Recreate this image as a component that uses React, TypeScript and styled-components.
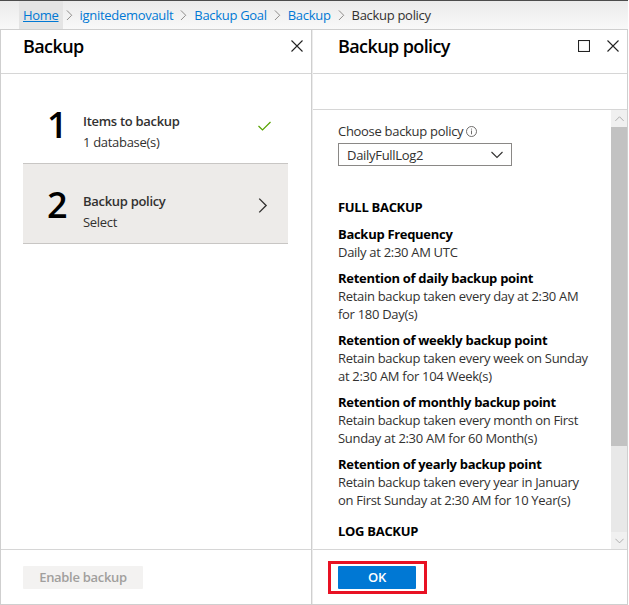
import { createGlobalStyle } from 'styled-components';
import styled from 'styled-components';

const GlobalStyle = createGlobalStyle`
  body {
    margin: 0;
    background: #ffffff;
    font-family: 'Open Sans', 'Noto Sans', sans-serif;
    letter-spacing: -0.3px;
    color: #323130;
  }
`;

const Frame = styled.div`
  width: 628px;
  height: 605px;
  display: flex;
  flex-direction: column;
  border-top: 1px solid #4c4c4c;
  box-sizing: border-box;
`;

const Breadcrumb = styled.nav`
  height: 28px;
  display: flex;
  align-items: center;
  padding-left: 19px;
  border-bottom: 1px solid #cfcfcf;
  background: linear-gradient(#ebebeb, #f9f9f9);
  font-size: 13px;
`;

const Crumb = styled.span<{ $current?: boolean; $active?: boolean }>`
  height: 100%;
  display: flex;
  align-items: center;
  padding: 0 4px;
  color: ${({ $current }) => ($current ? '#323130' : '#0078d4')};
  text-decoration: ${({ $active }) => ($active ? 'underline' : 'none')};
  background: ${({ $active }) => ($active ? '#e4e4e4' : 'transparent')};
`;

const Sep = styled.span`
  display: flex;
  align-items: center;
  margin: 0 3px;
  color: #8a8886;
`;

const Panels = styled.div`
  flex: 1;
  display: flex;
  border-left: 1px solid #cfcfcf;
  border-bottom: 1px solid #cfcfcf;
  min-height: 0;
`;

const Blade = styled.section<{ $width: number }>`
  width: ${({ $width }) => $width}px;
  display: flex;
  flex-direction: column;
  box-sizing: border-box;
  border-right: 1px solid #cfcfcf;

  & + & {
    border-left: 1px solid #ececec;
  }
`;

const Header = styled.header<{ $pad: number }>`
  height: 44px;
  flex-shrink: 0;
  display: flex;
  align-items: flex-start;
  box-sizing: border-box;
  padding-top: 4px;
  padding-left: ${({ $pad }) => $pad}px;
  padding-right: 4px;
  border-bottom: 1px solid #d6d6d6;
`;

const Title = styled.h2`
  flex: 1;
  margin: 0;
  font-size: 18px;
  line-height: 24px;
  font-weight: 600;
  letter-spacing: -0.6px;
  color: #000;
`;

const IconButton = styled.button`
  width: 20px;
  height: 20px;
  padding: 0;
  margin: 2px 0 0 9px;
  border: 0;
  background: none;
  display: flex;
  align-items: center;
  justify-content: center;
  color: #222;
`;

const Body = styled.div`
  flex: 1;
  min-height: 0;
  display: flex;
  flex-direction: column;
`;

const Steps = styled.div`
  padding: 10px 23px 0 22px;
`;

const Step = styled.div<{ $selected?: boolean }>`
  height: 79px;
  display: grid;
  grid-template-columns: 36px 1fr 30px;
  align-items: center;
  padding-left: 24px;
  border-bottom: 1px solid #c8c6c4;
  background: ${({ $selected }) => ($selected ? '#edebe9' : 'transparent')};
`;

const StepNumber = styled.div`
  font-size: 36px;
  line-height: 1;
  font-weight: 600;
  letter-spacing: 0;
  color: #000;
  padding-top: 3px;
`;

const StepText = styled.div`
  display: flex;
  flex-direction: column;
  font-size: 13px;
  line-height: 21px;
  padding-top: 16px;
`;

const StepTitle = styled.span`
  font-weight: 600;
`;

const StepIcon = styled.div`
  display: flex;
  align-items: center;
  padding-top: 4px;
`;

const Footer = styled.footer<{ $pad: number }>`
  height: 55px;
  flex-shrink: 0;
  display: flex;
  align-items: center;
  padding-left: ${({ $pad }) => $pad}px;
  border-top: 1px solid #d6d6d6;
  box-sizing: border-box;
`;

const Button = styled.button<{ $primary?: boolean; $width: number }>`
  width: ${({ $width }) => $width}px;
  height: 23px;
  border: 0;
  border-radius: 1px;
  font-family: inherit;
  letter-spacing: inherit;
  font-size: 13px;
  font-weight: 600;
  background: ${({ $primary }) => ($primary ? '#0078d4' : '#f3f2f1')};
  color: ${({ $primary }) => ($primary ? '#ffffff' : '#a19f9d')};
`;

const Highlight = styled.div`
  margin-left: -10px;
  padding: 2px 8px 2px 7px;
  border: 3px solid #e81123;
  display: flex;
`;

const CommandBar = styled.div`
  height: 35px;
  flex-shrink: 0;
  border-bottom: 1px solid #d6d6d6;
`;

const ScrollArea = styled.div`
  flex: 1;
  min-height: 0;
  display: flex;
`;

const Content = styled.div`
  flex: 1;
  overflow: hidden;
  padding: 12px 0 0 25px;
  font-size: 13px;
  line-height: 18px;
`;

const Label = styled.div`
  display: flex;
  align-items: center;
  gap: 3px;
  margin-bottom: 3px;
`;

const Select = styled.div`
  width: 174px;
  height: 23px;
  box-sizing: border-box;
  border: 1px solid #8a8886;
  display: flex;
  align-items: center;
  justify-content: space-between;
  padding: 0 8px 0 8px;
`;

const Heading = styled.div<{ $top: number }>`
  margin-top: ${({ $top }) => $top}px;
  margin-bottom: 9px;
  font-weight: 700;
  color: #000;
`;

const Group = styled.div`
  margin-bottom: 8px;
`;

const GroupTitle = styled.div`
  font-weight: 700;
  color: #000;
`;

const Scrollbar = styled.div`
  width: 16px;
  flex-shrink: 0;
  display: flex;
  flex-direction: column;
  background: #e8e8e8;
`;

const Arrow = styled.div`
  height: 17px;
  display: flex;
  align-items: center;
  justify-content: center;
  background: #f0f0f0;
`;

const Thumb = styled.div`
  height: 319px;
  background: #c2c2c2;
`;

const Track = styled.div`
  flex: 1;
`;

const Close = () => (
  <IconButton>
    <svg width="12" height="12" viewBox="0 0 12 12">
      <path d="M0.5 0.5 L11.5 11.5 M11.5 0.5 L0.5 11.5" stroke="currentColor" strokeWidth="1.1" fill="none" />
    </svg>
  </IconButton>
);

const Maximize = () => (
  <IconButton>
    <svg width="12" height="12" viewBox="0 0 12 12">
      <rect x="0.5" y="0.5" width="11" height="11" stroke="currentColor" strokeWidth="1.1" fill="none" />
    </svg>
  </IconButton>
);

const Chevron = ({ dir, size = 8, color = '#8a8886' }: { dir: 'right' | 'down' | 'up'; size?: number; color?: string }) => {
  const d =
    dir === 'right' ? 'M1 0.5 L6.5 6 L1 11.5' : dir === 'down' ? 'M0.5 1 L6 6.5 L11.5 1' : 'M0.5 6.5 L6 1 L11.5 6.5';
  const w = dir === 'right' ? 8 : 12;
  const h = dir === 'right' ? 12 : 8;
  return (
    <svg width={(w * size) / 8} height={(h * size) / 8} viewBox={`0 0 ${w} ${h}`}>
      <path d={d} stroke={color} strokeWidth="1.1" fill="none" />
    </svg>
  );
};

const crumbs = ['Home', 'ignitedemovault', 'Backup Goal', 'Backup'];

const groups = [
  { title: 'Backup Frequency', lines: ['Daily at 2:30 AM UTC'] },
  { title: 'Retention of daily backup point', lines: ['Retain backup taken every day at 2:30 AM', 'for 180 Day(s)'] },
  {
    title: 'Retention of weekly backup point',
    lines: ['Retain backup taken every week on Sunday', 'at 2:30 AM for 104 Week(s)'],
  },
  {
    title: 'Retention of monthly backup point',
    lines: ['Retain backup taken every month on First', 'Sunday at 2:30 AM for 60 Month(s)'],
  },
  {
    title: 'Retention of yearly backup point',
    lines: ['Retain backup taken every year in January', 'on First Sunday at 2:30 AM for 10 Year(s)'],
  },
];

export default function App() {
  return (
    <>
      <GlobalStyle />
      <Frame>
        <Breadcrumb>
          {crumbs.map((c, i) => (
            <span key={c} style={{ display: 'contents' }}>
              <Crumb $active={i === 0}>{c}</Crumb>
              <Sep>
                <Chevron dir="right" size={7} />
              </Sep>
            </span>
          ))}
          <Crumb $current>Backup policy</Crumb>
        </Breadcrumb>
        <Panels>
          <Blade $width={311}>
            <Header $pad={22}>
              <Title>Backup</Title>
              <Close />
            </Header>
            <Body>
              <Steps>
                <Step>
                  <StepNumber>1</StepNumber>
                  <StepText>
                    <StepTitle>Items to backup</StepTitle>
                    <span>1 database(s)</span>
                  </StepText>
                  <StepIcon>
                    <svg width="13" height="10" viewBox="0 0 13 10">
                      <path d="M0.5 5 L4.5 9 L12.5 1" stroke="#57a300" strokeWidth="1.2" fill="none" />
                    </svg>
                  </StepIcon>
                </Step>
                <Step $selected>
                  <StepNumber>2</StepNumber>
                  <StepText>
                    <StepTitle>Backup policy</StepTitle>
                    <span>Select</span>
                  </StepText>
                  <StepIcon>
                    <Chevron dir="right" size={10} color="#323130" />
                  </StepIcon>
                </Step>
              </Steps>
            </Body>
            <Footer $pad={22}>
              <Button $width={120}>Enable backup</Button>
            </Footer>
          </Blade>
          <Blade $width={316}>
            <Header $pad={25}>
              <Title>Backup policy</Title>
              <Maximize />
              <Close />
            </Header>
            <CommandBar />
            <ScrollArea>
              <Content>
                <Label>
                  Choose backup policy
                  <svg width="11" height="11" viewBox="0 0 11 11">
                    <circle cx="5.5" cy="5.5" r="5" stroke="#605e5c" strokeWidth="0.9" fill="none" />
                    <path d="M5.5 4.5 V8.3" stroke="#605e5c" strokeWidth="0.9" />
                    <circle cx="5.5" cy="3" r="0.6" fill="#605e5c" />
                  </svg>
                </Label>
                <Select>
                  <span>DailyFullLog2</span>
                  <Chevron dir="down" size={8} color="#323130" />
                </Select>
                <Heading $top={32}>FULL BACKUP</Heading>
                {groups.map((g) => (
                  <Group key={g.title}>
                    <GroupTitle>{g.title}</GroupTitle>
                    {g.lines.map((l) => (
                      <div key={l}>{l}</div>
                    ))}
                  </Group>
                ))}
                <Heading $top={13}>LOG BACKUP</Heading>
              </Content>
              <Scrollbar>
                <Arrow>
                  <Chevron dir="up" size={6} color="#a0a0a0" />
                </Arrow>
                <Thumb />
                <Track />
                <Arrow>
                  <Chevron dir="down" size={6} color="#a0a0a0" />
                </Arrow>
              </Scrollbar>
            </ScrollArea>
            <Footer $pad={25}>
              <Highlight>
                <Button $primary $width={78}>
                  OK
                </Button>
              </Highlight>
            </Footer>
          </Blade>
        </Panels>
      </Frame>
    </>
  );
}
